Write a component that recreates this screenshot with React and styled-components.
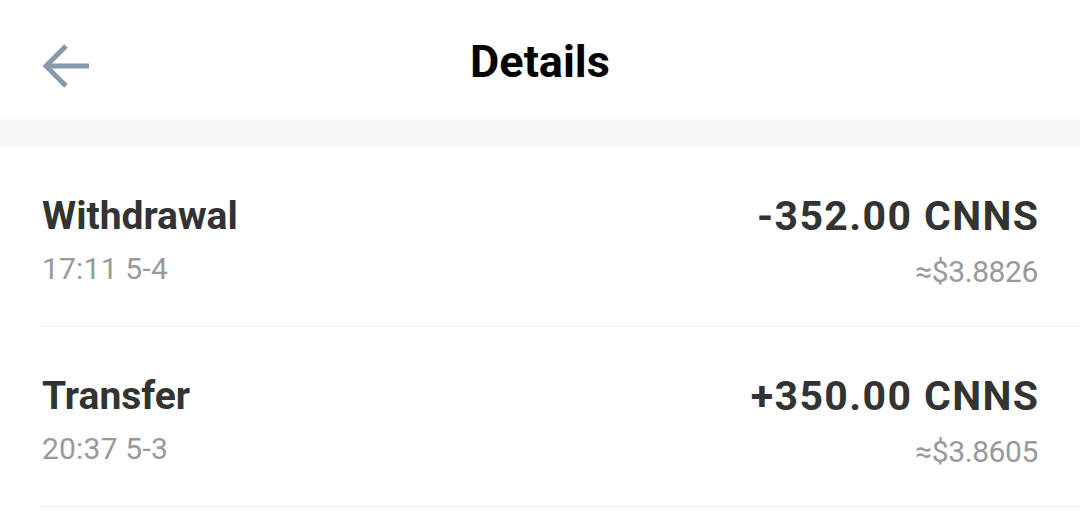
import React from 'react';
import styled, { createGlobalStyle } from 'styled-components';

const GlobalStyle = createGlobalStyle`
    body {
        margin: 0;
        background: #ffffff;
        font-family: Roboto, "Liberation Sans", sans-serif;
    }
`

const Page = styled.div`
    width: 1080px;
    min-height: 512px;
    background: #ffffff;
`

const Header = styled.header`
    height: 119px;
    display: grid;
    grid-template-columns: 120px 1fr 120px;
    align-items: center;
`

const BackButton = styled.button`
    width: 120px;
    height: 119px;
    padding: 12px 0 0 42px;
    border: none;
    background: transparent;
    display: flex;
    align-items: center;
`

const Title = styled.h1`
    margin: 0;
    padding-top: 5px;
    text-align: center;
    font-size: 45px;
    font-weight: 700;
    color: #000000;
    line-height: 114px;
`

const Band = styled.div`
    height: 28px;
    background: #f7f7f7;
`

const Row = styled.div`
    display: flex;
    justify-content: space-between;
    padding: 45px 42px 38px 42px;
    position: relative;
    &::after {
        content: '';
        position: absolute;
        left: 40px;
        right: 0;
        bottom: 0;
        height: 1px;
        background: #f0f0f0;
    }
`

const Col = styled.div`
    display: flex;
    flex-direction: column;
    align-items: ${({ right }) => (right ? 'flex-end' : 'flex-start')};
`

const Main = styled.div`
    font-size: ${({ right }) => (right ? '41px' : '39px')};
    letter-spacing: ${({ right }) => (right ? '1.4px' : '0')};
    margin-right: ${({ right }) => (right ? '-1.5px' : '0')};
    font-weight: 700;
    color: #333333;
    line-height: 48px;
`

const Sub = styled.div`
    margin-top: ${({ right }) => (right ? '14px' : '11px')};
    font-size: 30px;
    color: #999999;
    line-height: 35px;
    letter-spacing: ${({ right }) => (right ? '-0.4px' : '0.2px')};
`

const items = [
    { type: 'Withdrawal', time: '17:11 5-4', amount: '-352.00 CNNS', usd: '≈$3.8826' },
    { type: 'Transfer', time: '20:37 5-3', amount: '+350.00 CNNS', usd: '≈$3.8605' },
]

const App = () => {
    return (
        <Page>
            <GlobalStyle />
            <Header>
                <BackButton>
                    <svg width="48" height="46" viewBox="0 0 48 46" fill="none" stroke="#8799aa" strokeWidth="5" strokeLinecap="butt" strokeLinejoin="miter">
                        <path d="M47 23H6" />
                        <path d="M24 3L4 23l20 20" />
                    </svg>
                </BackButton>
                <Title>Details</Title>
                <div />
            </Header>
            <Band />
            {items.map(item => (
                <Row key={item.type}>
                    <Col>
                        <Main>{item.type}</Main>
                        <Sub>{item.time}</Sub>
                    </Col>
                    <Col right>
                        <Main right>{item.amount}</Main>
                        <Sub right>{item.usd}</Sub>
                    </Col>
                </Row>
            ))}
        </Page>
    )
}

export default App;
